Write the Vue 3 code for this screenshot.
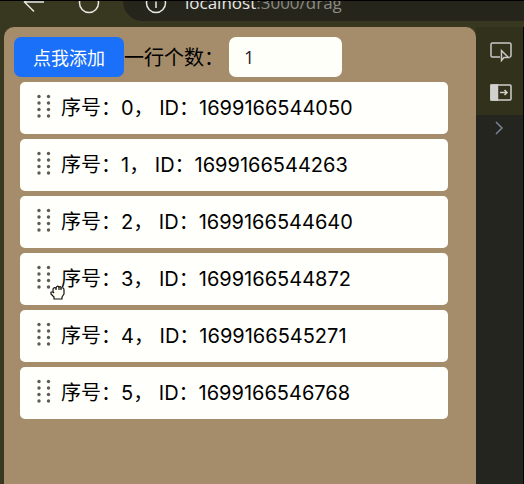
<script setup>
import { ref } from 'vue'

const perRow = ref('1')
const items = ref([
  1699166544050,
  1699166544263,
  1699166544640,
  1699166544872,
  1699166545271,
  1699166546768,
])

function addItem() {
  items.value.push(Date.now())
}
</script>

<template>
  <div class="browser">
    <header class="toolbar">
      <button class="nav-btn back" type="button" aria-label="Back">
        <svg width="24" height="24" viewBox="0 0 24 24" fill="none" stroke="#e8e8e4" stroke-width="1.5">
          <path d="M22 11H3M12 1.5L2.5 11L12 20.5" />
        </svg>
      </button>
      <button class="nav-btn reload" type="button" aria-label="Reload">
        <svg width="24" height="24" viewBox="0 0 24 24" fill="none" stroke="#e8e8e4" stroke-width="1.5">
          <circle cx="12" cy="12" r="9.5" />
        </svg>
      </button>
      <div class="address">
        <svg width="24" height="24" viewBox="0 0 24 24" fill="none" stroke="#e8e8e4" stroke-width="1.5">
          <circle cx="12" cy="12" r="9.5" />
          <path d="M12 10.5V17" />
        </svg>
        <span class="url">localhost<span class="path">:3000/drag</span></span>
      </div>
    </header>

    <div class="body">
      <main class="page">
        <div class="controls">
          <button class="add" type="button" @click="addItem">点我添加</button>
          <label class="count-label" for="per-row">一行个数：</label>
          <input id="per-row" v-model="perRow" class="count" type="text" />
        </div>
        <ul class="list">
          <li v-for="(id, index) in items" :key="id" class="item">
            <svg class="handle" width="14" height="24" viewBox="0 0 14 24" fill="#5c5c54">
              <template v-for="y in [2.5, 9, 15.5, 22]" :key="y">
                <circle cx="2" :cy="y" r="1.7" />
                <circle cx="11.5" :cy="y" r="1.7" />
              </template>
            </svg>
            <span>序号：{{ index }}， ID：{{ id }}</span>
          </li>
        </ul>
      </main>

      <aside class="devtools">
        <div class="tools">
          <button class="tool" type="button" aria-label="Inspect element">
            <svg width="22" height="20" viewBox="0 0 22 20" fill="none" stroke="#c9c9c6" stroke-width="1.5">
              <path d="M10 15H2.5Q1 15 1 13.5V2.5Q1 1 2.5 1H19.5Q21 1 21 2.5V13.5Q21 15 19.5 15" />
              <path d="M11.5 8.5V18.5L14 15.5H18.5Z" />
            </svg>
          </button>
          <button class="tool" type="button" aria-label="Toggle panel">
            <svg width="22" height="17" viewBox="0 0 22 17" fill="none" stroke="#d0d0cc" stroke-width="1.5">
              <rect x="1" y="1" width="20" height="15" rx="1" />
              <path d="M1 1H7.5V16H1Z" fill="#d0d0cc" />
              <path d="M10 8.5H17M14.5 6L17 8.5L14.5 11" />
            </svg>
          </button>
        </div>
        <div class="console">
          <svg width="8" height="14" viewBox="0 0 8 14" fill="none" stroke="#75869a" stroke-width="1.5">
            <path d="M1 1L7 7L1 13" />
          </svg>
        </div>
      </aside>
    </div>

    <svg class="cursor" width="16" height="16" viewBox="0 0 16 16" fill="#fffff4" stroke="#111" stroke-width="1.2" stroke-linejoin="round">
      <path d="M4 12L1 9V7H3V4Q4 2 6 3Q7 0 9 2Q11 1 11 3Q14 2 14 5V9L12 12V14H4Z" />
      <path d="M3 7L4 8M6 3V5M9 2V5M11 3V5" />
    </svg>
  </div>
</template>

<style>
body {
  margin: 0;
  background: #38371f;
}
</style>

<style scoped>
* {
  box-sizing: border-box;
}

.browser {
  position: relative;
  display: flex;
  flex-direction: column;
  min-height: 100vh;
  overflow: hidden;
  border-top: 1px solid #000;
  background: #38371f;
  font-family: Inter, "Noto Sans CJK SC", sans-serif;
  font-size: 20px;
}

button {
  padding: 0;
  border: 0;
  background: none;
  font: inherit;
}

svg {
  display: block;
  flex: none;
}

.toolbar {
  display: flex;
  height: 26px;
  padding-left: 22px;
}

.nav-btn {
  height: 24px;
  margin-top: -10px;
}

.reload {
  margin-left: 31px;
}

.address {
  display: flex;
  flex: 1;
  height: 40px;
  margin-top: -20px;
  margin-left: 22px;
  padding: 10px 0 0 21px;
  border-radius: 20px 0 0 20px;
  background: #25251c;
}

.url {
  margin-left: 17px;
  color: #e8e8e4;
  font-family: "Open Sans", sans-serif;
  font-size: 17px;
  line-height: 24px;
}

.path {
  color: #8c8c84;
}

.body {
  display: flex;
  flex: 1;
}

.page {
  flex: 1;
  margin-left: 4px;
  padding: 10px;
  border-radius: 10px 10px 0 0;
  background: #a58c6a;
}

.controls {
  display: flex;
  align-items: center;
  height: 40px;
}

.add {
  height: 40px;
  padding: 0 19px 1px;
  border-radius: 7px;
  background: #1a70f8;
  color: #fff;
  font-size: 18px;
}

.count-label {
  padding-bottom: 2px;
  color: #000;
}

.count {
  width: 113px;
  height: 40px;
  margin-left: 5px;
  padding: 0 15px;
  border: 0;
  border-radius: 7px;
  background: #fffffa;
  color: #222;
  font-family: "Open Sans", sans-serif;
  font-size: 18px;
}

.list {
  display: grid;
  gap: 5px;
  margin: 5px 18px 0 6px;
  padding: 0;
  list-style: none;
}

.item {
  display: flex;
  align-items: center;
  gap: 10px;
  height: 52px;
  padding: 0 17px 3px;
  border-radius: 5px;
  background: #fffffb;
  color: #000;
  white-space: nowrap;
}

.handle {
  margin-top: -2px;
}

.devtools {
  display: flex;
  flex-direction: column;
  width: 48px;
  border-right: 1px solid #000;
  background: #25251f;
}

.tools {
  display: flex;
  flex-direction: column;
  align-items: center;
  gap: 22px;
  height: 88px;
  padding: 15px 0 0 3px;
  background: #32311c;
}

.console {
  padding: 6px 0 0 19px;
}

.cursor {
  position: absolute;
  top: 284px;
  left: 50px;
}
</style>
